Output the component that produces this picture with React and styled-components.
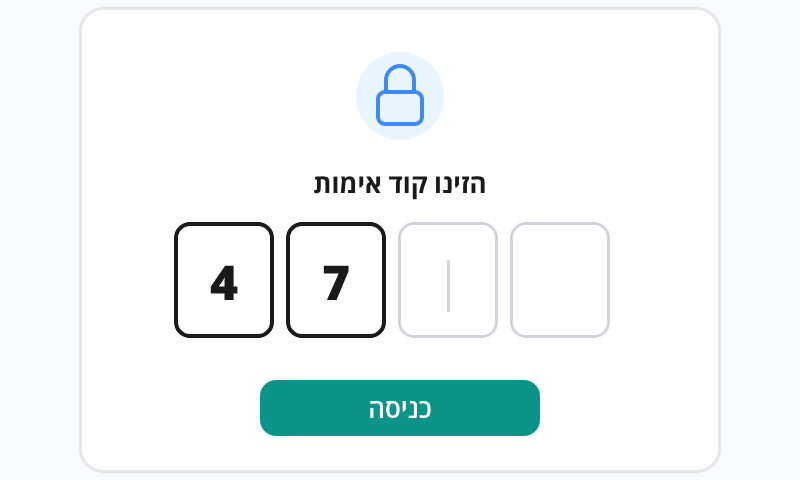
import React from 'react';
import styled, { createGlobalStyle } from 'styled-components';

const GlobalStyle = createGlobalStyle`
  html, body {
    margin: 0;
    height: 100%;
    background: #f9fafb;
    text-rendering: geometricPrecision;
  }
  #root {
    height: 100%;
  }
`;

const code = ['4', '7', '', ''];

const LockIcon = () => (
  <svg width="48" height="64" viewBox="0 0 48 64" fill="none" stroke="#3b8af6" strokeWidth="4">
    <path d="M10 28V16a14 14 0 0 1 28 0v12" />
    <rect x="2" y="28" width="44" height="32" rx="7" />
  </svg>
);

const App = () => (
  <Page dir="rtl">
    <GlobalStyle />
    <Card>
      <IconCircle>
        <LockIcon />
      </IconCircle>
      <Title>הזינו קוד אימות</Title>
      <CodeRow dir="ltr">
        {code.map((digit, i) => (
          <CodeBox key={i} $filled={digit !== ''}>
            {digit}
            {i === 2 && <Caret />}
          </CodeBox>
        ))}
      </CodeRow>
      <SubmitButton>כניסה</SubmitButton>
    </Card>
  </Page>
);

export default App;

const Page = styled.div`
  height: 480px;
  display: flex;
  align-items: center;
  justify-content: center;
  font-family: 'Noto Sans', 'Open Sans', sans-serif;
`;

const Card = styled.div`
  box-sizing: border-box;
  width: 642px;
  height: 466px;
  padding: 42px 0 34px;
  display: flex;
  flex-direction: column;
  align-items: center;
  background: #fff;
  border: 3px solid #e5e7eb;
  border-radius: 24px;
  will-change: transform;
`;

const IconCircle = styled.div`
  width: 88px;
  height: 88px;
  flex: none;
  border-radius: 50%;
  background: #eaf4fe;
  display: flex;
  align-items: center;
  justify-content: center;
`;

const Title = styled.h1`
  margin: 25px 0 21px;
  font-size: 26px;
  line-height: 36px;
  font-weight: 700;
  color: #1a1a1a;
`;

const CodeRow = styled.div`
  display: flex;
  flex: none;
  gap: 12px;
  margin-right: 16px;
`;

const CodeBox = styled.div`
  box-sizing: border-box;
  width: 100px;
  height: 116px;
  padding-top: 4px;
  display: flex;
  align-items: center;
  justify-content: center;
  border: ${(p) => (p.$filled ? '4px solid #1a1a1a' : '3px solid #d1d5db')};
  border-radius: 16px;
  background: #fff;
  font-size: 48px;
  font-weight: 900;
  color: #1a1a1a;
`;

const Caret = styled.span`
  width: 3px;
  height: 52px;
  margin-top: 8px;
  background: #d1d5db;
`;

const SubmitButton = styled.button`
  flex: none;
  width: 280px;
  height: 56px;
  margin-top: 42px;
  border: 0;
  border-radius: 16px;
  background: #0d9488;
  color: #fff;
  font-family: inherit;
  font-size: 26px;
  font-weight: 600;
`;
